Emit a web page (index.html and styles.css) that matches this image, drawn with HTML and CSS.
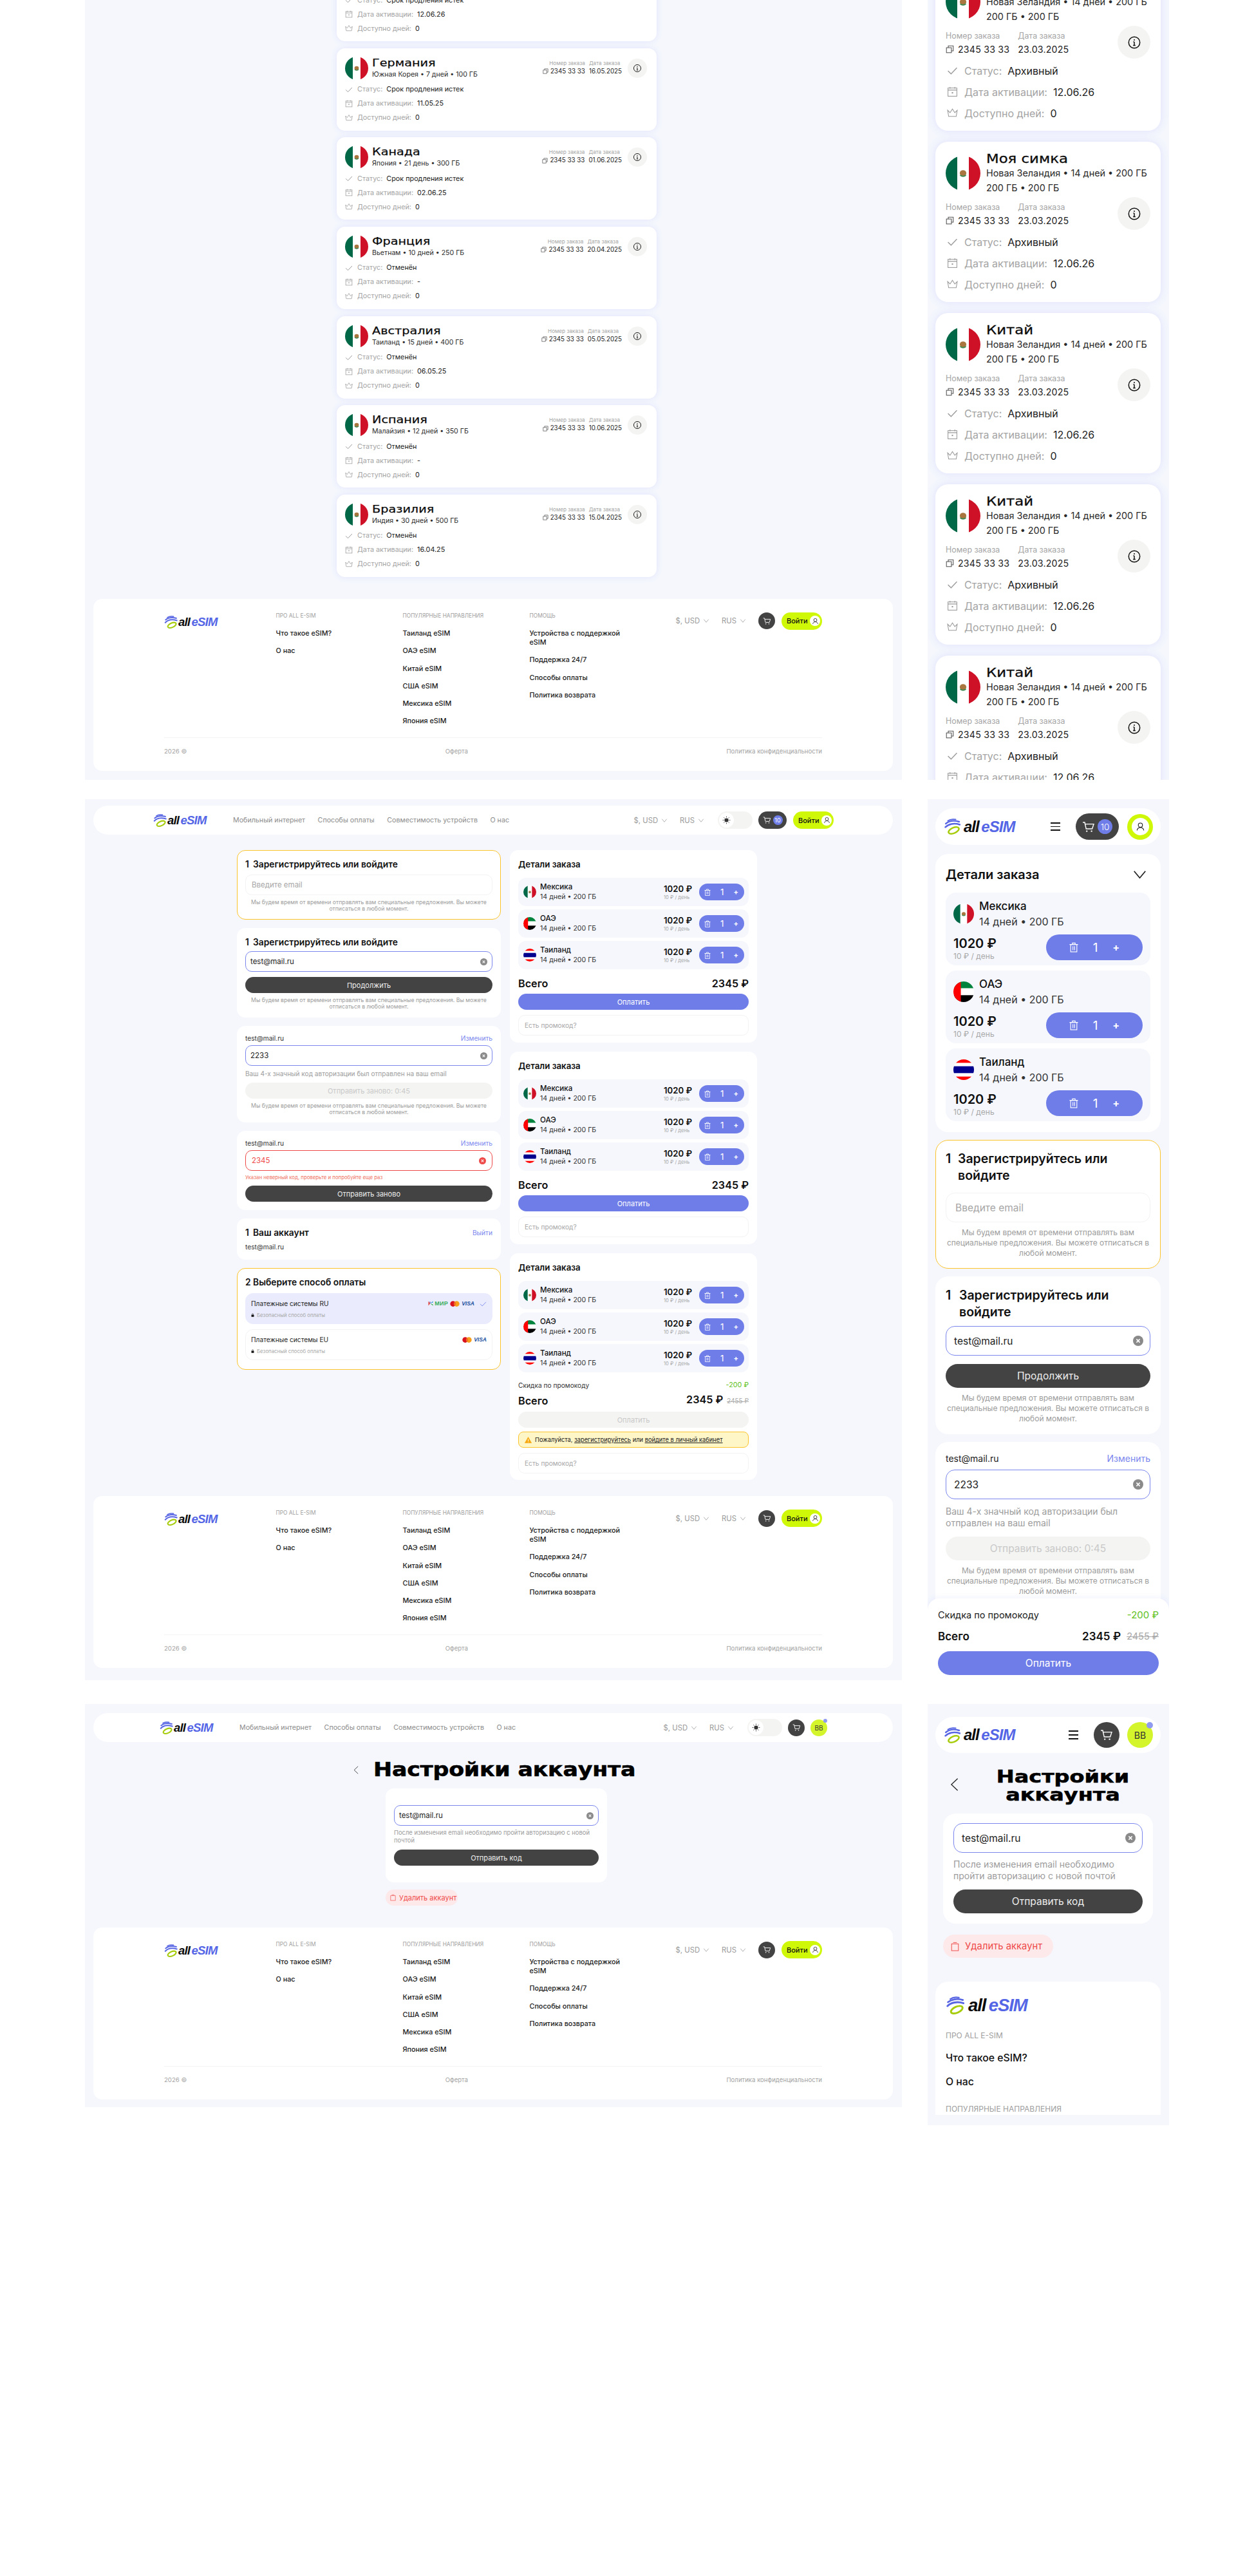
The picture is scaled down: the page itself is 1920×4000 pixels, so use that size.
FILE: index.html
```html
<!DOCTYPE html>
<html lang="ru">
<head>
<meta charset="utf-8">
<title>all eSIM</title>
<link rel="stylesheet" href="styles.css">
</head>
<body>
<svg class="defs" aria-hidden="true">
  <defs>
    <clipPath id="cc"><circle cx="18" cy="18" r="18"/></clipPath>
    <symbol id="flag-mx" viewBox="0 0 36 36"><g clip-path="url(#cc)"><rect width="36" height="36" fill="#fff"/><rect width="12" height="36" fill="#006847"/><rect x="24" width="12" height="36" fill="#ce1126"/><ellipse cx="18" cy="18" rx="3.4" ry="3.2" fill="#a8763e"/><path d="M15 20q3 2.4 6 0" stroke="#3f8a52" stroke-width="1.2" fill="none"/></g></symbol>
    <symbol id="flag-ae" viewBox="0 0 36 36"><g clip-path="url(#cc)"><rect width="36" height="12" fill="#00843d"/><rect y="12" width="36" height="12" fill="#fff"/><rect y="24" width="36" height="12" fill="#000"/><rect width="13" height="36" fill="#f00"/></g></symbol>
    <symbol id="flag-th" viewBox="0 0 36 36"><g clip-path="url(#cc)"><rect width="36" height="36" fill="#fff"/><rect width="36" height="6" fill="#f00"/><rect y="30" width="36" height="6" fill="#f00"/><rect y="12" width="36" height="12" fill="#00008f"/></g></symbol>
    <symbol id="logo-mark" viewBox="0 0 25 25"><g fill="none" stroke-linecap="round"><path d="M5.5 3.6C8.5 1.4 13 .7 17.5 1.6" stroke="#5866e4" stroke-width="2"/><path d="M2.2 8C7 4 15 2.6 23 5" stroke="#5866e4" stroke-width="2.4"/><path d="M1.6 13.4C6.4 8.4 15 6.6 24 9.4" stroke="#5866e4" stroke-width="2.6"/><ellipse cx="14.5" cy="18.5" rx="8.6" ry="4.2" transform="rotate(-24 14.5 18.5)" stroke="#a6cc0c" stroke-width="2.6"/></g></symbol>
    <symbol id="i-check" viewBox="0 0 16 16"><path d="M1.5 8.5 6 13 14.5 4" fill="none" stroke="currentColor" stroke-width="1.3"/></symbol>
    <symbol id="i-cal" viewBox="0 0 16 16"><g fill="none" stroke="currentColor"><rect x="1.5" y="2.5" width="13" height="12"/><path d="M1.5 5.5h13M4.5 1v2.5M11.5 1v2.5"/></g><rect x="7" y="8.5" width="2" height="2" fill="currentColor"/></symbol>
    <symbol id="i-crown" viewBox="0 0 16 16"><path d="M1 4l3.5 3.5L8 2l3.5 5.5L15 4l-1.5 9h-11z" fill="none" stroke="currentColor"/></symbol>
    <symbol id="i-copy" viewBox="0 0 16 16"><g fill="none" stroke="currentColor" stroke-width="1.3"><rect x="1.5" y="5" width="9.5" height="9.5"/><path d="M5 5V1.5h9.5V11H11"/></g></symbol>
    <symbol id="i-info" viewBox="0 0 24 24"><g fill="none" stroke="currentColor" stroke-width="1.6"><circle cx="12" cy="12" r="9.5"/><path d="M12 11v6M10 17h4M10.4 11H12"/></g><circle cx="12" cy="7.6" r="1.1" fill="currentColor"/></symbol>
    <symbol id="i-cart" viewBox="0 0 20 20"><g fill="none" stroke="currentColor" stroke-width="1.4"><path d="M1 3h3l2.2 10h9.4L18 5.6H4.6"/></g><circle cx="7.2" cy="16.6" r="1.2" fill="currentColor"/><circle cx="14.6" cy="16.6" r="1.2" fill="currentColor"/></symbol>
    <symbol id="i-user" viewBox="0 0 20 20"><g fill="none" stroke="currentColor" stroke-width="1.4"><circle cx="10" cy="7" r="4.4"/><path d="M3 18c.6-4 3-6 7-6s6.400 2 7 6"/></g></symbol>
    <symbol id="i-trash" viewBox="0 0 16 18"><g fill="none" stroke="currentColor" stroke-width="1.3"><rect x="2.500" y="4" width="11" height="13"/><path d="M.5 4h15M5.500 4V1.500h5V4M6.500 7v7M9.500 7v7"/></g></symbol>
    <symbol id="i-trash2" viewBox="0 0 16 18"><g fill="none" stroke="currentColor" stroke-width="1.200"><rect x="1.500" y="4" width="13" height="13"/><path d="M4.500 1.500h7"/></g></symbol>
    <symbol id="i-chev" viewBox="0 0 12 8"><path d="M1 1l5 6 5-6" fill="none" stroke="currentColor" stroke-width="1"/></symbol>
    <symbol id="i-back" viewBox="0 0 14 24"><path d="M12.500 2 2 12l10.500 10" fill="none" stroke="currentColor" stroke-width="1.400"/></symbol>
    <symbol id="i-sun" viewBox="0 0 20 20"><circle cx="10" cy="10" r="4.800" fill="#333"/><g stroke="#333" stroke-width="1.400"><path d="M10 1v2.400M10 16.600V19M1 10h2.400M16.600 10H19M3.600 3.600l1.700 1.700M14.700 14.700l1.700 1.700M3.600 16.400l1.700-1.700M14.700 5.300l1.700-1.700"/></g></symbol>
    <symbol id="i-x" viewBox="0 0 16 16"><circle cx="8" cy="8" r="8" fill="currentColor"/><path d="M5.400 5.400l5.200 5.200M10.600 5.400l-5.200 5.200" stroke="#fff" stroke-width="1.500"/></symbol>
    <symbol id="i-lock" viewBox="0 0 10 12"><path d="M3 5V3.400a2 2 0 0 1 4 0V5" fill="none" stroke="#111" stroke-width="1.100"/><rect x="1" y="5" width="8" height="6.500" rx="1" fill="#111"/></symbol>
    <symbol id="i-warn" viewBox="0 0 20 18"><path d="M10 1 19.500 17.500H.5z" fill="#f7a90f" stroke="#f7a90f" stroke-linejoin="round"/><path d="M10 6.500v6M10 14v1.600" stroke="#fff" stroke-width="1.600"/></symbol>
    <symbol id="i-mir" viewBox="0 0 10 14"><path d="M0 2l4 5-4 5z" fill="#e2483d"/><path d="M4 7l6-5v3z" fill="#1f9ad6"/><path d="M4 7l6 5V9z" fill="#37b24d"/><path d="M4 7 2 3l3 1z" fill="#5b4bc4"/></symbol>
    <symbol id="i-mc" viewBox="0 0 24 14"><circle cx="7.500" cy="7" r="7" fill="#d8131f"/><circle cx="16.500" cy="7" r="7" fill="#f79e1b"/><path d="M12 1.700a7 7 0 0 1 0 10.600 7 7 0 0 1 0-10.600z" fill="#f26522"/></symbol>
  </defs>
</svg>

<main class="board">

  <!-- ROW 1 · desktop orders -->
  <section class="frame f1d">
    <div class="orders">
      <article class="ord ord--cut"><div class="ord-rows"><p class="st"><svg class="ic"><use href="#i-check"/></svg><span class="lb">Статус:</span><b>Срок продления истек</b></p><p class="st"><svg class="ic"><use href="#i-cal"/></svg><span class="lb">Дата активации:</span><b>12.06.26</b></p><p class="st"><svg class="ic"><use href="#i-crown"/></svg><span class="lb">Доступно дней:</span><b>0</b></p></div></article>

      <article class="ord"><div class="ord-top"><svg class="fl"><use href="#flag-mx"/></svg><div class="ord-tt"><h3 class="wide"><span>Германия</span></h3><p>Южная Корея • 7 дней • 100 ГБ</p></div><div class="meta"><div><small>Номер заказа</small><span class="num"><svg class="ic-c"><use href="#i-copy"/></svg>2345 33 33</span></div><div><small>Дата заказа</small><span class="num">16.05.2025</span></div></div><span class="info"><svg><use href="#i-info"/></svg></span></div><div class="ord-rows"><p class="st"><svg class="ic"><use href="#i-check"/></svg><span class="lb">Статус:</span><b>Срок продления истек</b></p><p class="st"><svg class="ic"><use href="#i-cal"/></svg><span class="lb">Дата активации:</span><b>11.05.25</b></p><p class="st"><svg class="ic"><use href="#i-crown"/></svg><span class="lb">Доступно дней:</span><b>0</b></p></div></article>

      <article class="ord"><div class="ord-top"><svg class="fl"><use href="#flag-mx"/></svg><div class="ord-tt"><h3 class="wide"><span>Канада</span></h3><p>Япония • 21 день • 300 ГБ</p></div><div class="meta"><div><small>Номер заказа</small><span class="num"><svg class="ic-c"><use href="#i-copy"/></svg>2345 33 33</span></div><div><small>Дата заказа</small><span class="num">01.06.2025</span></div></div><span class="info"><svg><use href="#i-info"/></svg></span></div><div class="ord-rows"><p class="st"><svg class="ic"><use href="#i-check"/></svg><span class="lb">Статус:</span><b>Срок продления истек</b></p><p class="st"><svg class="ic"><use href="#i-cal"/></svg><span class="lb">Дата активации:</span><b>02.06.25</b></p><p class="st"><svg class="ic"><use href="#i-crown"/></svg><span class="lb">Доступно дней:</span><b>0</b></p></div></article>

      <article class="ord"><div class="ord-top"><svg class="fl"><use href="#flag-mx"/></svg><div class="ord-tt"><h3 class="wide"><span>Франция</span></h3><p>Вьетнам • 10 дней • 250 ГБ</p></div><div class="meta"><div><small>Номер заказа</small><span class="num"><svg class="ic-c"><use href="#i-copy"/></svg>2345 33 33</span></div><div><small>Дата заказа</small><span class="num">20.04.2025</span></div></div><span class="info"><svg><use href="#i-info"/></svg></span></div><div class="ord-rows"><p class="st"><svg class="ic"><use href="#i-check"/></svg><span class="lb">Статус:</span><b>Отменён</b></p><p class="st"><svg class="ic"><use href="#i-cal"/></svg><span class="lb">Дата активации:</span><b>-</b></p><p class="st"><svg class="ic"><use href="#i-crown"/></svg><span class="lb">Доступно дней:</span><b>0</b></p></div></article>

      <article class="ord"><div class="ord-top"><svg class="fl"><use href="#flag-mx"/></svg><div class="ord-tt"><h3 class="wide"><span>Австралия</span></h3><p>Таиланд • 15 дней • 400 ГБ</p></div><div class="meta"><div><small>Номер заказа</small><span class="num"><svg class="ic-c"><use href="#i-copy"/></svg>2345 33 33</span></div><div><small>Дата заказа</small><span class="num">05.05.2025</span></div></div><span class="info"><svg><use href="#i-info"/></svg></span></div><div class="ord-rows"><p class="st"><svg class="ic"><use href="#i-check"/></svg><span class="lb">Статус:</span><b>Отменён</b></p><p class="st"><svg class="ic"><use href="#i-cal"/></svg><span class="lb">Дата активации:</span><b>06.05.25</b></p><p class="st"><svg class="ic"><use href="#i-crown"/></svg><span class="lb">Доступно дней:</span><b>0</b></p></div></article>

      <article class="ord"><div class="ord-top"><svg class="fl"><use href="#flag-mx"/></svg><div class="ord-tt"><h3 class="wide"><span>Испания</span></h3><p>Малайзия • 12 дней • 350 ГБ</p></div><div class="meta"><div><small>Номер заказа</small><span class="num"><svg class="ic-c"><use href="#i-copy"/></svg>2345 33 33</span></div><div><small>Дата заказа</small><span class="num">10.06.2025</span></div></div><span class="info"><svg><use href="#i-info"/></svg></span></div><div class="ord-rows"><p class="st"><svg class="ic"><use href="#i-check"/></svg><span class="lb">Статус:</span><b>Отменён</b></p><p class="st"><svg class="ic"><use href="#i-cal"/></svg><span class="lb">Дата активации:</span><b>-</b></p><p class="st"><svg class="ic"><use href="#i-crown"/></svg><span class="lb">Доступно дней:</span><b>0</b></p></div></article>

      <article class="ord"><div class="ord-top"><svg class="fl"><use href="#flag-mx"/></svg><div class="ord-tt"><h3 class="wide"><span>Бразилия</span></h3><p>Индия • 30 дней • 500 ГБ</p></div><div class="meta"><div><small>Номер заказа</small><span class="num"><svg class="ic-c"><use href="#i-copy"/></svg>2345 33 33</span></div><div><small>Дата заказа</small><span class="num">15.04.2025</span></div></div><span class="info"><svg><use href="#i-info"/></svg></span></div><div class="ord-rows"><p class="st"><svg class="ic"><use href="#i-check"/></svg><span class="lb">Статус:</span><b>Отменён</b></p><p class="st"><svg class="ic"><use href="#i-cal"/></svg><span class="lb">Дата активации:</span><b>16.04.25</b></p><p class="st"><svg class="ic"><use href="#i-crown"/></svg><span class="lb">Доступно дней:</span><b>0</b></p></div></article>
    </div>

    <footer class="foot f-a">
      <div class="foot-top">
        <a class="logo"><svg><use href="#logo-mark"/></svg><span><i>all</i> <em>eSIM</em></span></a>
        <div class="fcol"><h4>ПРО ALL E-SIM</h4><a>Что такое eSIM?</a><a>О нас</a></div>
        <div class="fcol"><h4>ПОПУЛЯРНЫЕ НАПРАВЛЕНИЯ</h4><a>Таиланд eSIM</a><a>ОАЭ eSIM</a><a>Китай eSIM</a><a>США eSIM</a><a>Мексика eSIM</a><a>Япония eSIM</a></div>
        <div class="fcol fcol--n"><h4>ПОМОЩЬ</h4><a>Устройства с поддержкой eSIM</a><a>Поддержка 24/7</a><a>Способы оплаты</a><a>Политика возврата</a></div>
        <div class="tools"><span class="sel">$, USD<svg><use href="#i-chev"/></svg></span><span class="sel">RUS<svg><use href="#i-chev"/></svg></span><span class="cart cart--sm"><svg><use href="#i-cart"/></svg></span><span class="login">Войти<b><svg><use href="#i-user"/></svg></b></span></div>
      </div>
      <div class="foot-bot"><span>2026 ©</span><span>Оферта</span><span>Политика конфиденциальности</span></div>
    </footer>
  </section>

  <!-- ROW 1 · mobile orders -->
  <section class="frame f1m">
    <div class="morders">
      <article class="mord"><div class="mord-top"><svg class="mfl"><use href="#flag-mx"/></svg><div class="mord-tt"><h3 class="wide"><span>Китай</span></h3><p>Новая Зеландия • 14 дней • 200 ГБ</p><p>200 ГБ • 200 ГБ</p></div></div><div class="mmeta"><div class="mmeta-l"><div><small>Номер заказа</small><span class="mnum"><svg class="mic-c"><use href="#i-copy"/></svg>2345 33 33</span></div><div><small>Дата заказа</small><span class="mnum">23.03.2025</span></div></div><span class="minfo"><svg><use href="#i-info"/></svg></span></div><p class="mst"><svg class="mic"><use href="#i-check"/></svg><span class="lb">Статус:</span><b>Архивный</b></p><p class="mst"><svg class="mic"><use href="#i-cal"/></svg><span class="lb">Дата активации:</span><b>12.06.26</b></p><p class="mst"><svg class="mic"><use href="#i-crown"/></svg><span class="lb">Доступно дней:</span><b>0</b></p></article>

      <article class="mord"><div class="mord-top"><svg class="mfl"><use href="#flag-mx"/></svg><div class="mord-tt"><h3 class="wide"><span>Моя симка</span></h3><p>Новая Зеландия • 14 дней • 200 ГБ</p><p>200 ГБ • 200 ГБ</p></div></div><div class="mmeta"><div class="mmeta-l"><div><small>Номер заказа</small><span class="mnum"><svg class="mic-c"><use href="#i-copy"/></svg>2345 33 33</span></div><div><small>Дата заказа</small><span class="mnum">23.03.2025</span></div></div><span class="minfo"><svg><use href="#i-info"/></svg></span></div><p class="mst"><svg class="mic"><use href="#i-check"/></svg><span class="lb">Статус:</span><b>Архивный</b></p><p class="mst"><svg class="mic"><use href="#i-cal"/></svg><span class="lb">Дата активации:</span><b>12.06.26</b></p><p class="mst"><svg class="mic"><use href="#i-crown"/></svg><span class="lb">Доступно дней:</span><b>0</b></p></article>

      <article class="mord"><div class="mord-top"><svg class="mfl"><use href="#flag-mx"/></svg><div class="mord-tt"><h3 class="wide"><span>Китай</span></h3><p>Новая Зеландия • 14 дней • 200 ГБ</p><p>200 ГБ • 200 ГБ</p></div></div><div class="mmeta"><div class="mmeta-l"><div><small>Номер заказа</small><span class="mnum"><svg class="mic-c"><use href="#i-copy"/></svg>2345 33 33</span></div><div><small>Дата заказа</small><span class="mnum">23.03.2025</span></div></div><span class="minfo"><svg><use href="#i-info"/></svg></span></div><p class="mst"><svg class="mic"><use href="#i-check"/></svg><span class="lb">Статус:</span><b>Архивный</b></p><p class="mst"><svg class="mic"><use href="#i-cal"/></svg><span class="lb">Дата активации:</span><b>12.06.26</b></p><p class="mst"><svg class="mic"><use href="#i-crown"/></svg><span class="lb">Доступно дней:</span><b>0</b></p></article>

      <article class="mord"><div class="mord-top"><svg class="mfl"><use href="#flag-mx"/></svg><div class="mord-tt"><h3 class="wide"><span>Китай</span></h3><p>Новая Зеландия • 14 дней • 200 ГБ</p><p>200 ГБ • 200 ГБ</p></div></div><div class="mmeta"><div class="mmeta-l"><div><small>Номер заказа</small><span class="mnum"><svg class="mic-c"><use href="#i-copy"/></svg>2345 33 33</span></div><div><small>Дата заказа</small><span class="mnum">23.03.2025</span></div></div><span class="minfo"><svg><use href="#i-info"/></svg></span></div><p class="mst"><svg class="mic"><use href="#i-check"/></svg><span class="lb">Статус:</span><b>Архивный</b></p><p class="mst"><svg class="mic"><use href="#i-cal"/></svg><span class="lb">Дата активации:</span><b>12.06.26</b></p><p class="mst"><svg class="mic"><use href="#i-crown"/></svg><span class="lb">Доступно дней:</span><b>0</b></p></article>

      <article class="mord"><div class="mord-top"><svg class="mfl"><use href="#flag-mx"/></svg><div class="mord-tt"><h3 class="wide"><span>Китай</span></h3><p>Новая Зеландия • 14 дней • 200 ГБ</p><p>200 ГБ • 200 ГБ</p></div></div><div class="mmeta"><div class="mmeta-l"><div><small>Номер заказа</small><span class="mnum"><svg class="mic-c"><use href="#i-copy"/></svg>2345 33 33</span></div><div><small>Дата заказа</small><span class="mnum">23.03.2025</span></div></div><span class="minfo"><svg><use href="#i-info"/></svg></span></div><p class="mst"><svg class="mic"><use href="#i-check"/></svg><span class="lb">Статус:</span><b>Архивный</b></p><p class="mst"><svg class="mic"><use href="#i-cal"/></svg><span class="lb">Дата активации:</span><b>12.06.26</b></p><p class="mst"><svg class="mic"><use href="#i-crown"/></svg><span class="lb">Доступно дней:</span><b>0</b></p></article>
    </div>
  </section>

  <!-- ROW 2 · desktop checkout -->
  <section class="frame f2d">
    <header class="hdr hdr--a">
      <a class="logo"><svg><use href="#logo-mark"/></svg><span><i>all</i> <em>eSIM</em></span></a>
      <nav class="nav"><a>Мобильный интернет</a><a>Способы оплаты</a><a>Совместимость устройств</a><a>О нас</a></nav>
      <div class="tools"><span class="sel">$, USD<svg><use href="#i-chev"/></svg></span><span class="sel">RUS<svg><use href="#i-chev"/></svg></span><span class="tgl"><b><svg><use href="#i-sun"/></svg></b></span><span class="cart"><svg><use href="#i-cart"/></svg><b>10</b></span><span class="login">Войти<b><svg><use href="#i-user"/></svg></b></span></div>
    </header>

    <div class="checkout">
      <div class="col-form">
        <div class="box box--hl box-a">
          <h2 class="step"><span>1</span>Зарегистрируйтесь или войдите</h2>
          <div class="inp inp--ph">Введите email</div>
          <p class="note">Мы будем время от времени отправлять вам специальные предложения. Вы можете отписаться в любой момент.</p>
        </div>
        <div class="box box-b">
          <h2 class="step"><span>1</span>Зарегистрируйтесь или войдите</h2>
          <div class="inp inp--on">test@mail.ru<svg class="clr"><use href="#i-x"/></svg></div>
          <div class="btn btn--dark">Продолжить</div>
          <p class="note">Мы будем время от времени отправлять вам специальные предложения. Вы можете отписаться в любой момент.</p>
        </div>
        <div class="box box-c">
          <div class="rowline"><span>test@mail.ru</span><a>Изменить</a></div>
          <div class="inp inp--on">2233<svg class="clr"><use href="#i-x"/></svg></div>
          <p class="help">Ваш 4-х значный код авторизации был отправлен на ваш email</p>
          <div class="btn btn--off">Отправить заново: 0:45</div>
          <p class="note">Мы будем время от времени отправлять вам специальные предложения. Вы можете отписаться в любой момент.</p>
        </div>
        <div class="box box-d">
          <div class="rowline"><span>test@mail.ru</span><a>Изменить</a></div>
          <div class="inp inp--err">2345<svg class="clr"><use href="#i-x"/></svg></div>
          <p class="errtxt">Указан неверный код, проверьте и попробуйте еще раз</p>
          <div class="btn btn--dark">Отправить заново</div>
        </div>
        <div class="box box-e">
          <div class="rowline rowline--t"><h2 class="step"><span>1</span>Ваш аккаунт</h2><a>Выйти</a></div>
          <p class="plain">test@mail.ru</p>
        </div>
        <div class="box box--hl box-f">
          <h2 class="step2">2 Выберите способ оплаты</h2>
          <div class="pay pay--on">
            <div class="pay-t"><span>Платежные системы RU</span><span class="marks"><svg class="mir"><use href="#i-mir"/></svg><span class="mirt">МИР</span><svg class="mc"><use href="#i-mc"/></svg><span class="visa">VISA</span><svg class="ok"><use href="#i-check"/></svg></span></div>
            <p class="safe"><svg><use href="#i-lock"/></svg>Безопасный способ оплаты</p>
          </div>
          <div class="pay">
            <div class="pay-t"><span>Платежные системы EU</span><span class="marks"><svg class="mc"><use href="#i-mc"/></svg><span class="visa">VISA</span></span></div>
            <p class="safe"><svg><use href="#i-lock"/></svg>Безопасный способ оплаты</p>
          </div>
        </div>
      </div>

      <div class="col-sum">
        <div class="box sum">
          <h2 class="sum-h">Детали заказа</h2>
          <div class="lines">
            <div class="ln"><svg class="lf"><use href="#flag-mx"/></svg><div class="ln-n"><b>Мексика</b><span>14 дней • 200 ГБ</span></div><div class="ln-p"><b>1020 ₽</b><span>10 ₽ / день</span></div><div class="stp"><svg><use href="#i-trash"/></svg><b>1</b><i>+</i></div></div>
            <div class="ln"><svg class="lf"><use href="#flag-ae"/></svg><div class="ln-n"><b>ОАЭ</b><span>14 дней • 200 ГБ</span></div><div class="ln-p"><b>1020 ₽</b><span>10 ₽ / день</span></div><div class="stp"><svg><use href="#i-trash"/></svg><b>1</b><i>+</i></div></div>
            <div class="ln"><svg class="lf"><use href="#flag-th"/></svg><div class="ln-n"><b>Таиланд</b><span>14 дней • 200 ГБ</span></div><div class="ln-p"><b>1020 ₽</b><span>10 ₽ / день</span></div><div class="stp"><svg><use href="#i-trash"/></svg><b>1</b><i>+</i></div></div>
          </div>
          <div class="tot"><span>Всего</span><span>2345 ₽</span></div>
          <div class="btn btn--blue">Оплатить</div>
          <div class="inp inp--ph promo">Есть промокод?</div>
        </div>
        <div class="box sum">
          <h2 class="sum-h">Детали заказа</h2>
          <div class="lines">
            <div class="ln"><svg class="lf"><use href="#flag-mx"/></svg><div class="ln-n"><b>Мексика</b><span>14 дней • 200 ГБ</span></div><div class="ln-p"><b>1020 ₽</b><span>10 ₽ / день</span></div><div class="stp"><svg><use href="#i-trash"/></svg><b>1</b><i>+</i></div></div>
            <div class="ln"><svg class="lf"><use href="#flag-ae"/></svg><div class="ln-n"><b>ОАЭ</b><span>14 дней • 200 ГБ</span></div><div class="ln-p"><b>1020 ₽</b><span>10 ₽ / день</span></div><div class="stp"><svg><use href="#i-trash"/></svg><b>1</b><i>+</i></div></div>
            <div class="ln"><svg class="lf"><use href="#flag-th"/></svg><div class="ln-n"><b>Таиланд</b><span>14 дней • 200 ГБ</span></div><div class="ln-p"><b>1020 ₽</b><span>10 ₽ / день</span></div><div class="stp"><svg><use href="#i-trash"/></svg><b>1</b><i>+</i></div></div>
          </div>
          <div class="tot"><span>Всего</span><span>2345 ₽</span></div>
          <div class="btn btn--blue">Оплатить</div>
          <div class="inp inp--ph promo">Есть промокод?</div>
        </div>
        <div class="box sum sum--c">
          <h2 class="sum-h">Детали заказа</h2>
          <div class="lines">
            <div class="ln"><svg class="lf"><use href="#flag-mx"/></svg><div class="ln-n"><b>Мексика</b><span>14 дней • 200 ГБ</span></div><div class="ln-p"><b>1020 ₽</b><span>10 ₽ / день</span></div><div class="stp"><svg><use href="#i-trash"/></svg><b>1</b><i>+</i></div></div>
            <div class="ln"><svg class="lf"><use href="#flag-ae"/></svg><div class="ln-n"><b>ОАЭ</b><span>14 дней • 200 ГБ</span></div><div class="ln-p"><b>1020 ₽</b><span>10 ₽ / день</span></div><div class="stp"><svg><use href="#i-trash"/></svg><b>1</b><i>+</i></div></div>
            <div class="ln"><svg class="lf"><use href="#flag-th"/></svg><div class="ln-n"><b>Таиланд</b><span>14 дней • 200 ГБ</span></div><div class="ln-p"><b>1020 ₽</b><span>10 ₽ / день</span></div><div class="stp"><svg><use href="#i-trash"/></svg><b>1</b><i>+</i></div></div>
          </div>
          <div class="disc"><span>Скидка по промокоду</span><em>-200 ₽</em></div>
          <div class="tot tot--c"><span>Всего</span><span>2345 ₽<s>2455 ₽</s></span></div>
          <div class="btn btn--off">Оплатить</div>
          <div class="warn"><svg><use href="#i-warn"/></svg><span>Пожалуйста, <u>зарегистрируйтесь</u> или <u>войдите в личный кабинет</u></span></div>
          <div class="inp inp--ph promo">Есть промокод?</div>
        </div>
      </div>
    </div>

    <footer class="foot f-b">
      <div class="foot-top">
        <a class="logo"><svg><use href="#logo-mark"/></svg><span><i>all</i> <em>eSIM</em></span></a>
        <div class="fcol"><h4>ПРО ALL E-SIM</h4><a>Что такое eSIM?</a><a>О нас</a></div>
        <div class="fcol"><h4>ПОПУЛЯРНЫЕ НАПРАВЛЕНИЯ</h4><a>Таиланд eSIM</a><a>ОАЭ eSIM</a><a>Китай eSIM</a><a>США eSIM</a><a>Мексика eSIM</a><a>Япония eSIM</a></div>
        <div class="fcol fcol--n"><h4>ПОМОЩЬ</h4><a>Устройства с поддержкой eSIM</a><a>Поддержка 24/7</a><a>Способы оплаты</a><a>Политика возврата</a></div>
        <div class="tools"><span class="sel">$, USD<svg><use href="#i-chev"/></svg></span><span class="sel">RUS<svg><use href="#i-chev"/></svg></span><span class="cart cart--sm"><svg><use href="#i-cart"/></svg></span><span class="login">Войти<b><svg><use href="#i-user"/></svg></b></span></div>
      </div>
      <div class="foot-bot"><span>2026 ©</span><span>Оферта</span><span>Политика конфиденциальности</span></div>
    </footer>
  </section>

  <!-- ROW 2 · mobile checkout -->
  <section class="frame f2m">
    <header class="mhdr">
      <a class="logo logo--m"><svg><use href="#logo-mark"/></svg><span><i>all</i> <em>eSIM</em></span></a>
      <span class="burger"><i></i><i></i><i></i></span>
      <span class="mcart"><svg><use href="#i-cart"/></svg><b>10</b></span>
      <span class="muser"><b><svg><use href="#i-user"/></svg></b></span>
    </header>
    <div class="mbox msum">
      <div class="msum-h"><h2>Детали заказа</h2><svg><use href="#i-chev"/></svg></div>
      <div class="mln"><div class="mln-a"><svg><use href="#flag-mx"/></svg><div><b>Мексика</b><span>14 дней • 200 ГБ</span></div></div><div class="mln-b"><div class="mln-p"><b>1020 ₽</b><span>10 ₽ / день</span></div><div class="mstp"><svg><use href="#i-trash"/></svg><b>1</b><i>+</i></div></div></div>
      <div class="mln"><div class="mln-a"><svg><use href="#flag-ae"/></svg><div><b>ОАЭ</b><span>14 дней • 200 ГБ</span></div></div><div class="mln-b"><div class="mln-p"><b>1020 ₽</b><span>10 ₽ / день</span></div><div class="mstp"><svg><use href="#i-trash"/></svg><b>1</b><i>+</i></div></div></div>
      <div class="mln"><div class="mln-a"><svg><use href="#flag-th"/></svg><div><b>Таиланд</b><span>14 дней • 200 ГБ</span></div></div><div class="mln-b"><div class="mln-p"><b>1020 ₽</b><span>10 ₽ / день</span></div><div class="mstp"><svg><use href="#i-trash"/></svg><b>1</b><i>+</i></div></div></div>
    </div>
    <div class="mbox mbox--hl mb-a">
      <h2 class="mstep"><span>1</span><span>Зарегистрируйтесь или войдите</span></h2>
      <div class="minp minp--ph">Введите email</div>
      <p class="mnote">Мы будем время от времени отправлять вам специальные предложения. Вы можете отписаться в любой момент.</p>
    </div>
    <div class="mbox mb-b">
      <h2 class="mstep"><span>1</span><span>Зарегистрируйтесь или войдите</span></h2>
      <div class="minp minp--on">test@mail.ru<svg><use href="#i-x"/></svg></div>
      <div class="mbtn mbtn--dark">Продолжить</div>
      <p class="mnote">Мы будем время от времени отправлять вам специальные предложения. Вы можете отписаться в любой момент.</p>
    </div>
    <div class="mbox mb-c">
      <div class="mrow"><span>test@mail.ru</span><a>Изменить</a></div>
      <div class="minp minp--on">2233<svg><use href="#i-x"/></svg></div>
      <p class="mhelp">Ваш 4-х значный код авторизации был отправлен на ваш email</p>
      <div class="mbtn mbtn--off">Отправить заново: 0:45</div>
      <p class="mnote">Мы будем время от времени отправлять вам специальные предложения. Вы можете отписаться в любой момент.</p>
    </div>
    <div class="sheet">
      <div class="sheet-d"><span>Скидка по промокоду</span><em>-200 ₽</em></div>
      <div class="sheet-t"><b>Всего</b><span><b>2345 ₽</b><s>2455 ₽</s></span></div>
      <div class="mbtn mbtn--blue">Оплатить</div>
    </div>
  </section>

  <!-- ROW 3 · desktop settings -->
  <section class="frame f3d">
    <header class="hdr hdr--b">
      <a class="logo"><svg><use href="#logo-mark"/></svg><span><i>all</i> <em>eSIM</em></span></a>
      <nav class="nav"><a>Мобильный интернет</a><a>Способы оплаты</a><a>Совместимость устройств</a><a>О нас</a></nav>
      <div class="tools"><span class="sel">$, USD<svg><use href="#i-chev"/></svg></span><span class="sel">RUS<svg><use href="#i-chev"/></svg></span><span class="tgl"><b><svg><use href="#i-sun"/></svg></b></span><span class="cart cart--sm"><svg><use href="#i-cart"/></svg></span><span class="bb">BB<i></i></span></div>
    </header>
    <div class="set-title"><svg><use href="#i-back"/></svg><h1>Настройки аккаунта</h1></div>
    <div class="set-card">
      <div class="inp inp--on">test@mail.ru<svg class="clr"><use href="#i-x"/></svg></div>
      <p class="help">После изменения email необходимо пройти авторизацию с новой почтой</p>
      <div class="btn btn--dark">Отправить код</div>
    </div>
    <div class="del"><svg><use href="#i-trash2"/></svg>Удалить аккаунт</div>
    <footer class="foot f-c">
      <div class="foot-top">
        <a class="logo"><svg><use href="#logo-mark"/></svg><span><i>all</i> <em>eSIM</em></span></a>
        <div class="fcol"><h4>ПРО ALL E-SIM</h4><a>Что такое eSIM?</a><a>О нас</a></div>
        <div class="fcol"><h4>ПОПУЛЯРНЫЕ НАПРАВЛЕНИЯ</h4><a>Таиланд eSIM</a><a>ОАЭ eSIM</a><a>Китай eSIM</a><a>США eSIM</a><a>Мексика eSIM</a><a>Япония eSIM</a></div>
        <div class="fcol fcol--n"><h4>ПОМОЩЬ</h4><a>Устройства с поддержкой eSIM</a><a>Поддержка 24/7</a><a>Способы оплаты</a><a>Политика возврата</a></div>
        <div class="tools"><span class="sel">$, USD<svg><use href="#i-chev"/></svg></span><span class="sel">RUS<svg><use href="#i-chev"/></svg></span><span class="cart cart--sm"><svg><use href="#i-cart"/></svg></span><span class="login">Войти<b><svg><use href="#i-user"/></svg></b></span></div>
      </div>
      <div class="foot-bot"><span>2026 ©</span><span>Оферта</span><span>Политика конфиденциальности</span></div>
    </footer>
  </section>

  <!-- ROW 3 · mobile settings -->
  <section class="frame f3m">
    <header class="mhdr mhdr--b">
      <a class="logo logo--m"><svg><use href="#logo-mark"/></svg><span><i>all</i> <em>eSIM</em></span></a>
      <span class="burger"><i></i><i></i><i></i></span>
      <span class="mcart mcart--sm"><svg><use href="#i-cart"/></svg></span>
      <span class="mbb">BB<i></i></span>
    </header>
    <div class="mset-title"><svg><use href="#i-back"/></svg><h1>Настройки аккаунта</h1></div>
    <div class="mset-card">
      <div class="minp minp--on">test@mail.ru<svg><use href="#i-x"/></svg></div>
      <p class="mhelp">После изменения email необходимо пройти авторизацию с новой почтой</p>
      <div class="mbtn mbtn--dark">Отправить код</div>
    </div>
    <div class="mdel"><svg><use href="#i-trash2"/></svg>Удалить аккаунт</div>
    <div class="mfoot">
      <a class="logo logo--f"><svg><use href="#logo-mark"/></svg><span><i>all</i> <em>eSIM</em></span></a>
      <h4>ПРО ALL E-SIM</h4>
      <a class="mfl-a">Что такое eSIM?</a>
      <a class="mfl-a">О нас</a>
      <h4>ПОПУЛЯРНЫЕ НАПРАВЛЕНИЯ</h4>
    </div>
  </section>
</main>
</body>
</html>
```

FILE: styles.css
```css
* { box-sizing: border-box; }
html, body { margin: 0; padding: 0; background: #fff; }
body { font-family: Inter, "Liberation Sans", sans-serif; color: #111; height: 4000px; overflow: hidden; }
p, h1, h2, h3, h4 { margin: 0; font-weight: normal; }
i, em { font-style: normal; }
svg { display: block; }
.defs { width: 0; height: 0; position: absolute; }

.board { display: grid; grid-template-columns: 1269px 375px; column-gap: 40px; row-gap: 30px; margin-left: 132px; align-items: start; }
.frame { background: #f5f7fd; overflow: hidden; position: relative; }

/* frame sizes */
.f1d { height: 1211px; padding: 0 14px 0 13px; }
.f1m { height: 1211px; padding: 0 13px 0 12px; }
.f2d { height: 1368px; padding: 10px 14px 0 13px; margin-bottom: 7px; }
.f2m { height: 1375px; padding: 14px 13px 0 12px; }
.f3d { height: 626px; padding: 14px 14px 0 13px; }
.f3m { height: 654px; padding: 20px 13px 0 12px; }

/* wide display type */
.wide span { display: inline-block; transform-origin: 0 50%; transform: scaleX(1.24); white-space: nowrap; -webkit-text-stroke: .25px currentColor; }
.wide { font-family: "DejaVu Sans", sans-serif; }

/* desktop orders */
.orders { width: 497px; margin: -64px 0 0 378px; display: flex; flex-direction: column; gap: 10.67px; }
.ord { height: 128px; background: #fff; border-radius: 13px; padding: 13px 15px 0 13px; box-shadow: 0 0 10px rgba(105,115,240,.14); }
.ord--cut { padding-top: 53px; }
.ord-top { display: flex; align-items: center; height: 36px; }
.fl { width: 36px; height: 36px; flex: none; margin-right: 6px; }
.ord-tt h3 { font-size: 15.5px; line-height: 20px; color: #0b0b0b; }
.ord-tt p { font-size: 10.6px; line-height: 16px; color: #2c2c2c; white-space: nowrap; }
.meta { display: flex; gap: 6px; margin-left: auto; margin-right: 9px; margin-top: -2px; }
.meta small { display: block; font-size: 8.2px; line-height: 12px; color: #a5a5a5; text-align: right; }
.meta div:last-child small { text-align: left; }
.num { display: flex; align-items: center; font-size: 9.8px; line-height: 14px; color: #222; white-space: nowrap; }
.ic-c { width: 9px; height: 9px; color: #555; margin-right: 3px; }
.info { width: 30px; height: 30px; border-radius: 50%; background: #f4f4f2; display: grid; place-items: center; flex: none; }
.info svg { width: 14px; height: 14px; color: #111; }
.ord-rows { margin-top: 4px; }
.ord--cut .ord-rows { margin-top: 0; }
.st { display: flex; align-items: center; height: 22px; font-size: 10.8px; white-space: nowrap; }
.ic { width: 12px; height: 12px; color: #9a9a9a; margin-right: 7px; flex: none; }
.lb { color: #a4a4a4; margin-right: 6px; }
.st b, .mst b { font-weight: 400; color: #1c1c1c; }

/* mobile orders */
.morders { margin-top: -46px; display: flex; flex-direction: column; gap: 17px; }
.mord { height: 249px; background: #fff; border-radius: 20px; padding: 15px 16px 0; box-shadow: 0 0 14px rgba(105,115,240,.16); flex: none; }
.mord-top { display: flex; align-items: center; gap: 9px; }
.mfl { width: 54px; height: 54px; flex: none; }
.mord-tt h3 { font-size: 19px; line-height: 22px; color: #0b0b0b; }
.mord-tt h3 span { transform: scaleX(1.2); -webkit-text-stroke: .3px currentColor; }
.mord-tt p { font-size: 14.4px; line-height: 23px; color: #2a2a2a; white-space: nowrap; }
.mmeta { display: flex; justify-content: space-between; align-items: center; margin-top: 3px; }
.mmeta-l { display: flex; gap: 13px; padding-top: 4px; }
.mmeta small { display: block; font-size: 12.4px; line-height: 18px; color: #a5a5a5; }
.mnum { display: flex; align-items: center; font-size: 14.2px; line-height: 23px; color: #222; white-space: nowrap; letter-spacing: .2px; }
.mic-c { width: 13px; height: 13px; color: #555; margin-right: 6px; }
.minfo { width: 51px; height: 51px; background: #f4f4f2; border-radius: 50%; display: grid; place-items: center; }
.minfo svg { width: 22px; height: 22px; color: #111; }
.mst { display: flex; align-items: center; height: 33px; font-size: 16px; white-space: nowrap; padding-left: 2px; }
.mst:first-of-type { margin-top: 2px; }
.mic { width: 17px; height: 17px; color: #9a9a9a; margin-right: 10px; flex: none; }
.mst .lb { margin-right: 9px; }

/* footer */
.foot { height: 267px; background: #fff; border-radius: 14px; padding: 21px 110px 0; }
.f-a { margin-top: 34px; }
.f-b { margin-top: 25px; }
.f-c { margin-top: 34px; }
.foot-top { display: flex; height: 195px; border-bottom: 1px solid #f3f3f3; }
.foot .logo { width: 173.5px; margin-top: 5px; align-self: flex-start; }
.fcol { width: 197px; display: flex; flex-direction: column; gap: 13.3px; }
.fcol h4 { font-size: 8.4px; line-height: 10px; color: #a0a0a0; margin-bottom: 2.7px; white-space: nowrap; }
.fcol a { font-size: 10.8px; line-height: 14px; font-weight: 500; color: #1b1b1b; }
.fcol--n a { width: 145px; }
.foot .tools { margin-left: auto; align-self: flex-start; }
.foot-bot { display: flex; justify-content: space-between; padding-top: 14px; font-size: 9.6px; line-height: 13px; color: #a3a3a3; }

/* logo */
.logo { display: flex; align-items: center; gap: 1px; flex: none; }
.hdr .logo { width: 83px; }
.logo svg { width: 21px; height: 20px; }
.logo span { font: italic bold 18.5px/20px "Liberation Sans", sans-serif; letter-spacing: -.8px; white-space: nowrap; }
.logo i { font-style: italic; color: #0b0b0b; }
.logo em { font-style: italic; color: #5466e6; margin-left: -2px; }
.logo--m svg { width: 25px; height: 25px; }
.logo--m { gap: 5px; }
.logo--m span { font-size: 24px; letter-spacing: -1px; }
.logo--f svg { width: 28px; height: 28px; }
.logo--f { gap: 6px; }
.logo--f span { font-size: 27.5px; letter-spacing: -1.1px; }

/* headers */
.hdr { height: 45px; background: #fff; border-radius: 23px; display: flex; align-items: center; }
.hdr--a { padding: 0 92px 0 93px; }
.hdr--b { padding: 0 102px 0 103px; }
.nav { display: flex; gap: 19.500px; margin-left: 41px; font-size: 10.700px; color: #8c8c8c; white-space: nowrap; }
.tools { display: flex; align-items: center; margin-left: auto; }
.sel { display: flex; align-items: center; gap: 5px; font-size: 11.300px; color: #9a9a9a; margin-right: 19px; white-space: nowrap; }
.sel svg { width: 10px; height: 6px; color: #9a9a9a; }
.tgl { width: 54px; height: 27px; border-radius: 14px; background: #f4f4f2; margin: 0 9px 0 2px; padding: 2px; }
.tgl b { width: 23px; height: 23px; border-radius: 50%; background: #fff; display: grid; place-items: center; }
.tgl svg { width: 13px; height: 13px; }
.cart { display: flex; align-items: center; justify-content: center; gap: 3px; width: 44px; height: 27px; border-radius: 14px; background: #434343; color: #fff; margin-right: 10px; }
.cart svg { width: 13px; height: 13px; }
.cart b { width: 15px; height: 15px; border-radius: 50%; background: #6f7de8; font-size: 9px; font-weight: 400; display: grid; place-items: center; }
.cart--sm { width: 26px; border-radius: 50%; height: 26px; }
.hdr .cart--sm { margin-right: 9px; }
.login { display: flex; align-items: center; justify-content: space-between; width: 63px; height: 27px; border-radius: 14px; background: #cff808; padding: 0 3px 0 8px; font-size: 11px; font-weight: 500; color: #111; }
.login b { width: 16px; height: 16px; border-radius: 50%; background: #fff; display: grid; place-items: center; }
.login svg { width: 11px; height: 11px; }
.bb { position: relative; width: 26px; height: 26px; border-radius: 50%; background: #d4f52c; display: grid; place-items: center; font-size: 10px; color: #333; }
.bb i { position: absolute; top: -1px; right: 0; width: 6px; height: 6px; border-radius: 50%; background: #8f9bf0; }

/* checkout */
.checkout { display: flex; gap: 14px; margin: 24px 0 0 223px; align-items: flex-start; }
.col-form { width: 410px; display: flex; flex-direction: column; gap: 13px; }
.col-sum { width: 384px; display: flex; flex-direction: column; gap: 14px; }
.box { background: #fff; border-radius: 13px; padding: 13px; }
.box--hl { border: 1px solid #fbc42c; padding: 12px; }
.box-a { height: 108px; }
.box-b { height: 139px; }
.box-c { height: 150px; }
.box-d { height: 123px; }
.box-e { height: 64px; }
.box-f { height: 158px; }
.step { font-size: 13.800px; line-height: 18px; font-weight: 600; display: flex; white-space: nowrap; color: #111; }
.step span { width: 12px; }
.box-a .step { margin-top: 0; margin-bottom: 7px; }
.box-b .step { margin-bottom: 5px; }
.inp { display: flex; align-items: center; justify-content: space-between; height: 32px; border-radius: 10px; padding: 0 7px; font-size: 11.5px; background: #fff; color: #222; }
.inp--ph { border: 1px solid #f3f3f3; color: #a6a6a6; padding: 0 9px; }
.inp--on { border: 1px solid #7b87ee; }
.inp--err { border: 1px solid #ef4a4a; color: #ef4a4a; padding: 0 9px; }
.clr { width: 11px; height: 11px; color: #8a8a8a; }
.inp--err .clr { color: #ef4a4a; }
.note { font-size: 8.7px; line-height: 10px; color: #9c9c9c; text-align: center; margin-top: 6px; }
.btn { height: 25px; border-radius: 13px; display: grid; place-items: center; font-size: 11px; }
.btn--dark { background: #434343; color: #ededed; margin-top: 8px; }
.btn--off { background: #f4f4f2; color: #c9c9c9; }
.btn--blue { background: #6f7de8; color: #fff; }
.rowline { display: flex; justify-content: space-between; align-items: center; font-size: 10.2px; line-height: 12px; color: #333; margin-bottom: 5px; }
.rowline a { color: #7b87ee; }
.rowline--t { align-items: center; margin-bottom: 4px; }
.box-c .rowline, .box-d .rowline { margin-top: 0; }
.help { font-size: 10.1px; line-height: 12px; color: #9c9c9c; margin: 6px 0 8px; }
.errtxt { font-size: 7.8px; line-height: 10px; color: #ef6f5e; margin: 5px 0 8px; }
.box-d .btn--dark { margin-top: 0; }
.plain { font-size: 10.2px; line-height: 12px; color: #333; margin-top: 7px; }
.step2 { font-size: 13.800px; line-height: 18px; font-weight: 600; margin-bottom: 8px; }
.pay { height: 48px; border-radius: 12px; border: 1px solid #f3f3f3; padding: 8px 8px 0; margin-top: 8px; }
.pay--on { background: #eaecfd; border-color: #eaecfd; margin-top: 0; }
.pay-t { display: flex; justify-content: space-between; align-items: center; font-size: 10.200px; line-height: 14px; color: #222; }
.marks { display: flex; align-items: center; gap: 2px; }
.mir { width: 8px; height: 10px; }
.mirt { font: bold 9px/10px "Liberation Sans", sans-serif; color: #37ad5b; letter-spacing: .3px; }
.mc { width: 15px; height: 9px; margin: 0 1px; }
.visa { font: italic bold 8.500px/10px "Liberation Sans", sans-serif; color: #1a4f9c; }
.ok { width: 11px; height: 11px; color: #7b87ee; margin-left: 6px; }
.safe { display: flex; align-items: center; gap: 4px; font-size: 7.800px; line-height: 10px; color: #a7a7a7; margin-top: 6px; }
.safe svg { width: 5px; height: 6px; }

/* order summary */
.sum { height: 299px; }
.sum--c { height: 352px; }
.sum-h { font-size: 13.300px; line-height: 18px; font-weight: 600; color: #111; margin-bottom: 12px; }
.lines { display: flex; flex-direction: column; gap: 5px; }
.ln { display: flex; align-items: center; height: 44px; background: #f5f7fd; border-radius: 12px; padding: 0 7px 0 8px; }
.lf { width: 20px; height: 20px; margin-right: 6px; flex: none; }
.ln-n { display: flex; flex-direction: column; flex: 1; }
.ln-n b { font-size: 11.600px; line-height: 16px; font-weight: 500; color: #111; }
.ln-n span { font-size: 10.600px; line-height: 16px; color: #333; }
.ln-p { display: flex; flex-direction: column; width: 55px; }
.ln-p b { font-size: 13.200px; line-height: 17px; font-weight: 600; color: #111; white-space: nowrap; }
.ln-p span { font-size: 7.600px; line-height: 9px; color: #a8a8a8; white-space: nowrap; }
.stp { display: flex; align-items: center; justify-content: space-between; width: 70px; height: 26px; border-radius: 13px; background: #6f7de8; color: #fff; padding: 0 9px 0 8px; }
.stp svg { width: 10px; height: 11px; }
.stp b { font-weight: 400; font-size: 13.500px; }
.stp i { font-size: 11px; font-weight: 700; }
.tot { display: flex; justify-content: space-between; align-items: center; font-size: 16.200px; line-height: 22px; font-weight: 600; margin: 11px 0 5px; color: #111; }
.promo { margin-top: 8px; font-size: 10.200px; }
.disc { display: flex; justify-content: space-between; font-size: 10.200px; line-height: 14px; color: #333; margin-top: 13px; }
.disc em { color: #5fc11e; font-size: 10.800px; }
.tot--c { margin: 5px 0 6px; line-height: 20px; }
.tot s { font-size: 9.800px; font-weight: 400; color: #a8a8a8; margin-left: 6px; }
.warn { display: flex; align-items: center; gap: 5px; height: 25px; border: 1px solid #fbc42c; background: #fff6c8; border-radius: 8px; padding: 0 9px; margin-top: 6px; font-size: 9.300px; color: #222; white-space: nowrap; }
.warn svg { width: 11px; height: 10px; }

/* settings desktop */
.set-title { display: flex; align-items: center; margin: 23px 0 0 404px; height: 40px; }
.set-title svg { width: 8px; height: 15px; color: #222; margin-right: 23px; }
.set-title h1 { font: bold 30px/40px "DejaVu Sans", sans-serif; color: #000; white-space: nowrap; letter-spacing: -.2px; transform: scaleX(1.16); transform-origin: 0 50%; -webkit-text-stroke: .6px #000; }
.set-card { width: 344px; height: 146px; background: #fff; border-radius: 13px; margin: 9px 0 0 454px; padding: 26px 13px 0; }
.set-card .help { font-size: 9.400px; margin: 5px 0 8px; }
.set-card .btn--dark { margin-top: 0; }
.del { display: flex; align-items: center; gap: 5px; width: 112px; height: 25px; border-radius: 13px; background: #fde9e9; color: #ef4a4a; font-size: 11px; margin: 11px 0 0 454px; padding: 0 7px; white-space: nowrap; }
.del svg { width: 9px; height: 11px; flex: none; }

/* mobile shared */
.mhdr { height: 57px; background: #fff; border-radius: 28px; display: flex; align-items: center; padding: 0 12px 0 14px; }
.mhdr--b { height: 56px; }
.burger { display: flex; flex-direction: column; gap: 4px; width: 15px; margin-left: auto; }
.burger i { height: 1.800px; background: #111; }
.mcart { display: flex; align-items: center; gap: 4px; justify-content: center; width: 67px; height: 41px; border-radius: 21px; background: #434343; color: #fff; margin-left: 24px; }
.mcart svg { width: 20px; height: 20px; }
.mcart b { width: 23px; height: 23px; border-radius: 50%; background: #6f7de8; font-size: 13.500px; font-weight: 300; display: grid; place-items: center; }
.mcart--sm { width: 40px; height: 40px; margin-left: 24px; }
.muser { width: 40px; height: 40px; border-radius: 50%; background: #cff808; display: grid; place-items: center; margin-left: 13px; }
.muser b { width: 27px; height: 27px; border-radius: 50%; background: #fff; display: grid; place-items: center; }
.muser svg { width: 15px; height: 15px; }
.mbb { position: relative; width: 40px; height: 40px; border-radius: 50%; background: #d4f52c; display: grid; place-items: center; font-size: 14px; color: #333; margin-left: 12px; }
.mbb i { position: absolute; top: 0; right: 0; width: 10px; height: 10px; border-radius: 50%; background: #8f9bf0; }

.mbox { background: #fff; border-radius: 20px; padding: 12px 16px; margin-top: 12px; }
.mbox--hl { border: 1px solid #fbc42c; padding: 11px 15px; }
.msum { margin-top: 14px; height: 432px; padding-top: 17px; }
.msum-h { display: flex; justify-content: space-between; align-items: center; margin-bottom: 13px; padding-right: 5px; }
.msum-h h2 { font-size: 20px; line-height: 30px; font-weight: 600; color: #111; }
.msum-h svg { width: 23px; height: 14px; color: #222; }
.mln { height: 113px; background: #f5f7fd; border-radius: 16px; padding: 9px 12px 0; margin-bottom: 8px; }
.mln-a { display: flex; align-items: center; gap: 8px; }
.mln-a svg { width: 32px; height: 32px; flex: none; }
.mln-a b { display: block; font-size: 17px; line-height: 24px; font-weight: 500; color: #111; }
.mln-a span { display: block; font-size: 16px; line-height: 24px; color: #333; }
.mln-b { display: flex; justify-content: space-between; align-items: center; margin-top: 8px; }
.mln-p b { display: block; font-size: 20px; line-height: 26px; font-weight: 600; color: #111; }
.mln-p span { display: block; font-size: 12px; line-height: 13px; color: #a8a8a8; }
.mstp { display: flex; align-items: center; justify-content: space-between; width: 150px; height: 40px; border-radius: 20px; background: #6f7de8; color: #fff; padding: 0 36px; }
.mstp svg { width: 14px; height: 16px; }
.mstp b { font-weight: 400; font-size: 19px; }
.mstp i { font-size: 16px; font-weight: 700; }

.mb-a { height: 200px; }
.mb-b { height: 245px; }
.mb-c { height: 300px; }
.mstep { display: flex; gap: 10px; font-size: 19.500px; line-height: 26px; font-weight: 600; color: #111; margin-top: 4px; }
.mstep span:first-child { flex: none; width: 9px; }
.mstep span:last-child { max-width: 250px; }
.mb-a .mstep { margin-bottom: 14px; }
.mb-b .mstep { margin-bottom: 9px; gap: 12px; }
.minp { display: flex; align-items: center; justify-content: space-between; height: 46px; border-radius: 14px; padding: 0 10px 0 12px; font-size: 15.500px; background: #fff; color: #222; }
.minp svg { width: 16px; height: 16px; color: #8a8a8a; }
.minp--ph { border: 1px solid #f3f3f3; color: #a6a6a6; padding: 0 14px; }
.minp--on { border: 1px solid #7b87ee; }
.mnote { font-size: 12px; line-height: 16px; color: #9c9c9c; text-align: center; margin-top: 8px; }
.mbtn { height: 37px; border-radius: 19px; display: grid; place-items: center; font-size: 15.500px; }
.mbtn--dark { background: #434343; color: #ededed; margin-top: 13px; }
.mbtn--off { background: #f4f4f2; color: #c9c9c9; }
.mbtn--blue { background: #6f7de8; color: #fff; }
.mrow { display: flex; justify-content: space-between; align-items: center; font-size: 14px; line-height: 20px; color: #222; margin: 4px 0 7px; }
.mrow a { color: #7b87ee; }
.mhelp { font-size: 14px; line-height: 18px; color: #9c9c9c; margin: 10px 0 12px; }
.sheet { position: absolute; left: 0; right: 0; bottom: 0; height: 134px; background: #fff; border-radius: 18px 18px 0 0; padding: 16px 16px 0; box-shadow: 0 -2px 8px rgba(105,115,240,.08); }
.sheet-d { display: flex; justify-content: space-between; font-size: 14.500px; line-height: 20px; color: #222; }
.sheet-d em { color: #5fc11e; font-size: 15px; }
.sheet-t { display: flex; justify-content: space-between; align-items: center; font-size: 17px; line-height: 24px; margin: 11px 0 11px; }
.sheet-t b { font-weight: 600; color: #111; }
.sheet-t span { display: flex; align-items: center; }
.sheet-t s { font-size: 14.500px; color: #a8a8a8; margin-left: 9px; }

.mset-title { position: relative; margin: 23px 0 0; height: 56px; }
.mset-title svg { position: absolute; left: 23px; top: 13px; width: 13px; height: 26px; color: #222; }
.mset-title h1 { font: bold 27px/28px "DejaVu Sans", sans-serif; text-align: center; color: #000; width: 240px; margin-left: 78px; transform: scaleX(1.24); -webkit-text-stroke: .6px #000; }
.mset-card { background: #fff; border-radius: 20px; margin: 15px 12px 0; height: 171px; padding: 15px 16px 0; }
.mset-card .mbtn--dark { margin-top: 0; }
.mset-card .mhelp { margin: 9px 0 12px; }
.mdel { display: flex; align-items: center; gap: 9px; width: 171px; height: 36px; border-radius: 18px; background: #fde9e9; color: #ef4a4a; font-size: 14.800px; margin: 17px 0 0 12px; padding: 0 12px; white-space: nowrap; }
.mdel svg { width: 13px; height: 15px; }
.mfoot { height: 207px; background: #fff; border-radius: 20px 20px 0 0; margin-top: 37px; padding: 23px 16px 0; overflow: hidden; }
.mfoot h4 { font-size: 12px; line-height: 14px; color: #9e9e9e; margin-top: 26px; white-space: nowrap; }
.mfoot .logo { margin-left: 1px; }
.mfoot .mfl-a { display: block; font-size: 15.800px; line-height: 20px; font-weight: 500; color: #111; margin-top: 17px; }
.mfoot h4 + .mfl-a { margin-top: 18px; }
.mfoot .mfl-a + h4 { margin-top: 25px; }
```
